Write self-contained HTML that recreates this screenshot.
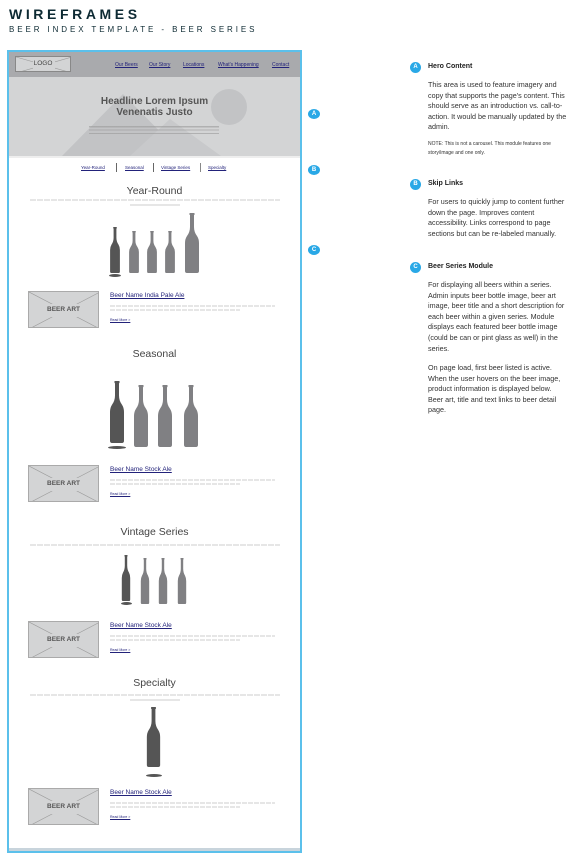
<!DOCTYPE html>
<html><head><meta charset="utf-8"><style>
*{margin:0;padding:0;box-sizing:border-box}
body{width:585px;height:860px;background:#fff;font-family:"Liberation Sans",sans-serif;position:relative;overflow:hidden;color:#333}
.a{position:absolute}
.frame{left:7px;top:50px;width:295px;height:803px;border:2px solid #5bc0eb;background:#fff}
.nav a{position:absolute;top:62px;font-size:5px;color:#22227a;text-decoration:underline}
.h2{position:absolute;left:9px;width:291px;text-align:center;font-size:10.5px;color:#444}
.lorem{position:absolute;left:30px;width:250px;height:7px;background:repeating-linear-gradient(90deg,#e6e6e6 0 6px,transparent 6px 7px)}
.lorem2{position:absolute;left:130px;width:50px;height:2px;background:#e6e6e6}
.art{position:absolute;left:28px;width:71px;height:37px;background:#d3d4d5;border:1px solid #aaa;overflow:hidden}
.art span{position:absolute;left:0;right:0;top:14px;text-align:center;font-size:6.5px;font-weight:bold;color:#555}
.bt{position:absolute;left:110px;font-size:6.5px;color:#22227a;text-decoration:underline}
.rm{position:absolute;left:110px;font-size:3.5px;color:#22227a;text-decoration:underline}
.desc{position:absolute;left:110px;width:165px;height:5px;background:repeating-linear-gradient(90deg,#e6e6e6 0 5px,transparent 5px 6px)}
.sh{position:absolute;height:3px;border-radius:50%;background:#555}
.note{position:absolute;left:428px;width:140px;font-size:7.2px;line-height:10.6px;color:#333}
.ht{position:absolute;left:428px;font-size:7px;font-weight:bold;color:#222}
.c{position:absolute;left:410px;width:11px;height:11px;border-radius:50%;background:#29a8e6;color:#fff;font-size:6px;font-weight:bold;text-align:center;line-height:11px}
.m{position:absolute;left:308px;width:12px;height:10px;background:#29a8e6;border-radius:50%;color:#fff;font-size:6px;font-weight:bold;text-align:center;line-height:10px}
</style></head><body>
<div class="a" style="left:9px;top:6px;font-size:14px;font-weight:bold;letter-spacing:3.6px;color:#0d2a33">WIREFRAMES</div>
<div class="a" style="left:9px;top:25px;font-size:8px;letter-spacing:2.9px;color:#0d2a33">BEER INDEX TEMPLATE - BEER SERIES</div>

<div class="a frame"></div>
<div class="a" style="left:9px;top:52px;width:291px;height:25px;background:#a9aaad"></div>
<div class="a" style="left:15px;top:56px;width:56px;height:16px;background:#d3d4d5;border:1px solid #888;overflow:hidden">
<svg width="56" height="16" style="position:absolute;left:0;top:0"><line x1="0" y1="0" x2="56" y2="16" stroke="#999" stroke-width=".6"/><line x1="56" y1="0" x2="0" y2="16" stroke="#999" stroke-width=".6"/><rect x="17" y="3" width="22" height="9" fill="#d3d4d5"/></svg>
<span style="position:absolute;left:0;right:0;top:3px;text-align:center;font-size:6.5px;line-height:8px;color:#444">LOGO</span></div>
<div class="nav"><a style="left:115px">Our Beers</a><a style="left:149px">Our Story</a><a style="left:183px">Locations</a><a style="left:218px">What's Happening</a><a style="left:272px">Contact</a></div>
<div class="a" style="left:9px;top:77px;width:291px;height:79px;background:#d3d4d5;overflow:hidden">
<svg width="291" height="79" style="position:absolute;left:0;top:0"><polygon points="53,79 114,17 175,79" fill="#c2c3c5"/><polygon points="121,79 161,42 212,79" fill="#c8c9cb"/><circle cx="220" cy="30" r="18" fill="#c2c3c5"/></svg>
<div style="position:absolute;left:0;right:0;top:19px;text-align:center;font-size:10px;font-weight:bold;color:#555;line-height:11px">Headline Lorem Ipsum<br>Venenatis Justo</div>
<div style="position:absolute;left:80px;width:130px;top:47px;height:10px;background:repeating-linear-gradient(0deg,#999 0 1.2px,transparent 1.2px 3.3px);opacity:.6"></div>
</div>
<div class="a" style="left:9px;top:156px;width:291px;height:2px;background:#eee"></div>
<div class="a" style="left:81px;top:165px;font-size:4.5px;color:#22227a;text-decoration:underline">Year-Round</div>
<div class="a" style="left:116px;top:163px;width:1px;height:9px;background:#666"></div>
<div class="a" style="left:125px;top:165px;font-size:4.5px;color:#22227a;text-decoration:underline">Seasonal</div>
<div class="a" style="left:153px;top:163px;width:1px;height:9px;background:#666"></div>
<div class="a" style="left:161px;top:165px;font-size:4.5px;color:#22227a;text-decoration:underline">Vintage Series</div>
<div class="a" style="left:200px;top:163px;width:1px;height:9px;background:#888"></div>
<div class="a" style="left:208px;top:165px;font-size:4.5px;color:#22227a;text-decoration:underline">Specialty</div>

<svg width="0" height="0" style="position:absolute"><defs><symbol id="b" viewBox="0 0 20 60" preserveAspectRatio="none"><path d="M7.5 0H12.5V2H12V14Q12 19 15 23Q17 26 17 30V58Q17 60 15 60H5Q3 60 3 58V30Q3 26 5 23Q8 19 8 14V2H7.5Z"/></symbol></defs></svg>

<div class="h2" style="top:185px">Year-Round</div>
<div class="lorem" style="top:199px;height:2px"></div><div class="lorem2" style="top:204px"></div>
<svg class="a" style="left:108px;top:227px" width="14" height="46" fill="#555"><use href="#b" width="14" height="46"/></svg>
<svg class="a" style="left:127px;top:231px" width="14" height="42" fill="#808083"><use href="#b" width="14" height="42"/></svg>
<svg class="a" style="left:145px;top:231px" width="14" height="42" fill="#808083"><use href="#b" width="14" height="42"/></svg>
<svg class="a" style="left:163px;top:231px" width="14" height="42" fill="#808083"><use href="#b" width="14" height="42"/></svg>
<svg class="a" style="left:182px;top:213px" width="20" height="60" fill="#808083"><use href="#b" width="20" height="60"/></svg>
<div class="sh" style="left:109px;top:274px;width:12px"></div>
<div class="art" style="top:291px"><svg width="71" height="37"><line x1="0" y1="0" x2="71" y2="37" stroke="#999" stroke-width=".6"/><line x1="71" y1="0" x2="0" y2="37" stroke="#999" stroke-width=".6"/><rect x="14" y="12" width="43" height="13" fill="#d3d4d5"/></svg><span>BEER ART</span></div>
<div class="bt" style="top:292px">Beer Name India Pale Ale</div>
<div class="desc" style="top:305px;height:2px"></div><div class="desc" style="top:309px;height:2px;width:130px"></div>
<div class="rm" style="top:318px">Read More &gt;</div>

<div class="h2" style="top:348px">Seasonal</div>
<svg class="a" style="left:107px;top:381px" width="20" height="62" fill="#555"><use href="#b" width="20" height="62"/></svg>
<svg class="a" style="left:131px;top:385px" width="20" height="62" fill="#808083"><use href="#b" width="20" height="62"/></svg>
<svg class="a" style="left:155px;top:385px" width="20" height="62" fill="#808083"><use href="#b" width="20" height="62"/></svg>
<svg class="a" style="left:181px;top:385px" width="20" height="62" fill="#808083"><use href="#b" width="20" height="62"/></svg>
<div class="sh" style="left:108px;top:446px;width:18px"></div>
<div class="art" style="top:465px"><svg width="71" height="37"><line x1="0" y1="0" x2="71" y2="37" stroke="#999" stroke-width=".6"/><line x1="71" y1="0" x2="0" y2="37" stroke="#999" stroke-width=".6"/><rect x="14" y="12" width="43" height="13" fill="#d3d4d5"/></svg><span>BEER ART</span></div>
<div class="bt" style="top:466px">Beer Name Stock Ale</div>
<div class="desc" style="top:479px;height:2px"></div><div class="desc" style="top:483px;height:2px;width:130px"></div>
<div class="rm" style="top:492px">Read More &gt;</div>

<div class="h2" style="top:526px">Vintage Series</div>
<div class="lorem" style="top:544px;height:2px"></div>
<svg class="a" style="left:120px;top:555px" width="12" height="46" fill="#555"><use href="#b" width="12" height="46"/></svg>
<svg class="a" style="left:139px;top:558px" width="12" height="46" fill="#808083"><use href="#b" width="12" height="46"/></svg>
<svg class="a" style="left:157px;top:558px" width="12" height="46" fill="#808083"><use href="#b" width="12" height="46"/></svg>
<svg class="a" style="left:176px;top:558px" width="12" height="46" fill="#808083"><use href="#b" width="12" height="46"/></svg>
<div class="sh" style="left:121px;top:602px;width:11px"></div>
<div class="art" style="top:621px"><svg width="71" height="37"><line x1="0" y1="0" x2="71" y2="37" stroke="#999" stroke-width=".6"/><line x1="71" y1="0" x2="0" y2="37" stroke="#999" stroke-width=".6"/><rect x="14" y="12" width="43" height="13" fill="#d3d4d5"/></svg><span>BEER ART</span></div>
<div class="bt" style="top:622px">Beer Name Stock Ale</div>
<div class="desc" style="top:635px;height:2px"></div><div class="desc" style="top:639px;height:2px;width:130px"></div>
<div class="rm" style="top:648px">Read More &gt;</div>

<div class="h2" style="top:677px">Specialty</div>
<div class="lorem" style="top:694px;height:2px"></div><div class="lorem2" style="top:699px"></div>
<svg class="a" style="left:144px;top:707px" width="19" height="60" fill="#555"><use href="#b" width="19" height="60"/></svg>
<div class="sh" style="left:146px;top:774px;width:16px"></div>
<div class="art" style="top:788px"><svg width="71" height="37"><line x1="0" y1="0" x2="71" y2="37" stroke="#999" stroke-width=".6"/><line x1="71" y1="0" x2="0" y2="37" stroke="#999" stroke-width=".6"/><rect x="14" y="12" width="43" height="13" fill="#d3d4d5"/></svg><span>BEER ART</span></div>
<div class="bt" style="top:789px">Beer Name Stock Ale</div>
<div class="desc" style="top:802px;height:2px"></div><div class="desc" style="top:806px;height:2px;width:130px"></div>
<div class="rm" style="top:815px">Read More &gt;</div>
<div class="a" style="left:9px;top:848px;width:291px;height:3px;background:#c8d4dc"></div>

<div class="m" style="top:109px">A</div>
<div class="m" style="top:165px">B</div>
<div class="m" style="top:245px">C</div>

<div class="c" style="top:62px">A</div><div class="ht" style="top:63px">Hero Content</div>
<div class="note" style="top:80px">This area is used to feature imagery and copy that supports the page's content. This should serve as an introduction vs. call-to-action. It would be manually updated by the admin.</div>
<div class="note" style="top:140px;font-size:5px;line-height:9px">NOTE: This is not a carousel. This module features one story/image and one only.</div>
<div class="c" style="top:179px">B</div><div class="ht" style="top:180px">Skip Links</div>
<div class="note" style="top:197px">For users to quickly jump to content further down the page. Improves content accessibility. Links correspond to page sections but can be re-labeled manually.</div>
<div class="c" style="top:262px">C</div><div class="ht" style="top:263px">Beer Series Module</div>
<div class="note" style="top:280px">For displaying all beers within a series. Admin inputs beer bottle image, beer art image, beer title and a short description for each beer within a given series. Module displays each featured beer bottle image (could be can or pint glass as well) in the series.</div>
<div class="note" style="top:363px">On page load, first beer listed is active. When the user hovers on the beer image, product information is displayed below. Beer art, title and text links to beer detail page.</div>
</body></html>
